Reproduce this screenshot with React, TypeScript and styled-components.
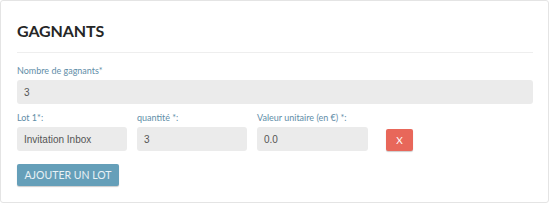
import { ReactElement } from 'react';
import styled, { createGlobalStyle } from 'styled-components';

const GlobalStyle = createGlobalStyle`
  html, body {
    margin: 0;
    padding: 0;
    background: #ffffff;
  }
  body {
    font-family: Lato, "Open Sans", sans-serif;
  }
`;

type Lot = {
  name: string;
  quantity: string;
  value: string;
};

const lots: Lot[] = [{ name: 'Invitation Inbox', quantity: '3', value: '0.0' }];

const App = (): ReactElement => {
  return (
    <>
      <GlobalStyle />
      <Card>
        <Title>GAGNANTS</Title>
        <Divider />

        <Field>
          <Label>Nombre de gagnants*</Label>
          <Input>3</Input>
        </Field>

        {lots.map((lot, i) => (
          <LotRow key={lot.name}>
            <Field width={110}>
              <Label>Lot {i + 1}*:</Label>
              <Input>{lot.name}</Input>
            </Field>
            <Field width={110}>
              <Label>quantité *:</Label>
              <Input>{lot.quantity}</Input>
            </Field>
            <Field width={111}>
              <Label>Valeur unitaire (en €) *:</Label>
              <Input>{lot.value}</Input>
            </Field>
            <RemoveButton>X</RemoveButton>
          </LotRow>
        ))}

        <AddButton>AJOUTER UN LOT</AddButton>
      </Card>
    </>
  );
};

const Card = styled.div`
  box-sizing: border-box;
  width: 549px;
  height: 203px;
  border: 1px solid #e4e4e4;
  border-radius: 3px;
  padding: 0 15px 0 16px;
  display: flex;
  flex-direction: column;
`;

const Title = styled.h2`
  margin: 20px 0 0;
  font-size: 16px;
  line-height: 20px;
  font-weight: 700;
  color: #262626;
  letter-spacing: -0.1px;
`;

const Divider = styled.hr`
  margin: 11px 0 0;
  border: 0;
  border-top: 1px solid #eeeeee;
  width: 516px;
`;

const Field = styled.div<{ width?: number }>`
  display: flex;
  flex-direction: column;
  width: ${(p) => (p.width ? `${p.width}px` : '516px')};
  margin-top: 12px;
`;

const Label = styled.label`
  font-size: 9px;
  line-height: 12px;
  color: #5f8ea8;
  margin-bottom: 3px;
`;

const Input = styled.div`
  box-sizing: border-box;
  height: 24px;
  padding: 0 7px;
  display: flex;
  align-items: center;
  background: #ebebeb;
  border-radius: 3px;
  font-family: "Liberation Sans", Arial, sans-serif;
  font-size: 10px;
  color: #555555;
`;

const LotRow = styled.div`
  display: flex;
  align-items: flex-end;
  gap: 10px;
  margin-top: -4px;
`;

const RemoveButton = styled.button`
  box-sizing: border-box;
  width: 27px;
  height: 22px;
  margin-left: 8px;
  border: 0;
  border-radius: 2px;
  background: #e8675a;
  color: #ffffff;
  font-family: Lato, sans-serif;
  font-size: 10px;
  box-shadow: 0 1px 1px rgba(0, 0, 0, 0.2);
  padding: 0;
`;

const AddButton = styled.button`
  align-self: flex-start;
  box-sizing: border-box;
  margin-top: 13px;
  width: 102px;
  height: 22px;
  border: 0;
  border-radius: 2px;
  background: #659fb9;
  color: #e9f2f6;
  font-family: Lato, sans-serif;
  font-size: 10.5px;
  padding: 0;
  box-shadow: 0 1px 1px rgba(0, 0, 0, 0.2);
`;

export default App;
